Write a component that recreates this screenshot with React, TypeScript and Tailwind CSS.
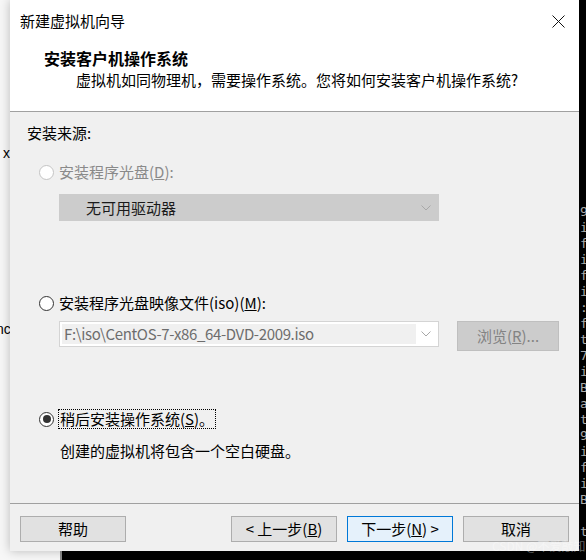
import React from 'react';

const FONT = { fontFamily: '"Noto Sans CJK SC", "Noto Sans", sans-serif' };

const Radio = ({ checked, disabled }: { checked?: boolean; disabled?: boolean }) => (
    <span
        className={`w-[15px] h-[15px] shrink-0 rounded-full border flex items-center justify-center bg-white ${
            disabled ? 'border-[#c4c4c4]' : 'border-[#333333]'
        }`}
    >
        {checked && <span className="w-[8px] h-[8px] rounded-full bg-[#333333]" />}
    </span>
);

const Chevron = ({ color = '#a0a0a0' }: { color?: string }) => (
    <svg width="10" height="6" viewBox="0 0 10 6" className="shrink-0">
        <polyline points="0.5,0.5 5,5 9.5,0.5" fill="none" stroke={color} strokeWidth="1" />
    </svg>
);

const Button = ({ children, primary }: { children: React.ReactNode; primary?: boolean }) => (
    <div
        className={`w-[106px] h-[26px] flex items-center justify-center text-[15px] text-black border ${
            primary ? 'bg-[#e5f1fb] border-[#0078d7]' : 'bg-[#e1e1e1] border-[#adadad]'
        }`}
    >
        {children}
    </div>
);

// bits of the terminal text peeking out on the right
const sideChars = ['9', 'i', 'f', 'i', 'f', 'i', ':', 'f', 't', '7', 'i', 'B', 'a', 't', '9', 'i', 'f', 'i', 'B', '', 't'];

export default function App() {
    return (
        <div className="relative w-[586px] h-[560px] overflow-hidden bg-[#f7f7f7]" style={FONT}>
            {/* terminal window behind */}
            <div className="absolute left-[60px] top-0 right-0 bottom-0 bg-black border-l-2 border-[#8c8c8c]" />
            <div
                className="absolute left-[580px] top-[204px] flex flex-col text-[13px] leading-[16px] text-[#b4b4b4]"
                style={{ fontFamily: '"DejaVu Sans Mono", monospace' }}
            >
                {sideChars.map((c, i) => (
                    <span key={i} className="h-[16px]">{c}</span>
                ))}
            </div>
            <span className="absolute left-[3px] top-[143px] text-[14px] text-black" style={{ fontFamily: '"Liberation Sans", sans-serif' }}>x</span>
            <span className="absolute left-[-4px] top-[319px] text-[14px] text-black" style={{ fontFamily: '"Liberation Sans", sans-serif' }}>nc</span>

            {/* dialog */}
            <div className="absolute left-[10px] top-0 w-[569px] h-[551px] flex flex-col bg-[#f0f0f0] shadow-[0_0_10px_rgba(0,0,0,0.25)]">
                {/* title bar */}
                <div className="h-[42px] flex items-center justify-between bg-white pl-[10px] pr-[14px]">
                    <span className="text-[15px] text-black">新建虚拟机向导</span>
                    <svg width="13" height="13" viewBox="0 0 13 13">
                        <path d="M0.5 0.5 L12.5 12.5 M12.5 0.5 L0.5 12.5" stroke="#111" strokeWidth="1" />
                    </svg>
                </div>

                {/* header */}
                <div className="h-[70px] bg-white border-b border-[#a0a0a0] flex flex-col">
                    <div className="mt-[6px] pl-[34px] text-[16px] leading-[20px] font-bold text-black">安装客户机操作系统</div>
                    <div className="mt-[2px] pl-[66px] text-[15px] leading-[20px] text-black">
                        虚拟机如同物理机，需要操作系统。您将如何安装客户机操作系统?
                    </div>
                </div>

                {/* body */}
                <div className="flex flex-col text-[15px] leading-[20px]">
                    <div className="mt-[11px] pl-[17px] text-black">安装来源:</div>

                    <div className="mt-[19px] pl-[29px] flex items-center gap-[5px] text-[#8a8a8a]">
                        <Radio disabled />
                        <span>
                            安装程序光盘(<span className="underline">D</span>):
                        </span>
                    </div>

                    <div className="mt-[12px] ml-[49px] w-[380px] h-[27px] bg-[#cccccc] flex items-center justify-between pl-[27px] pr-[8px] text-[#1a1a1a]">
                        <span>无可用驱动器</span>
                        <Chevron color="#a8a8a8" />
                    </div>

                    <div className="mt-[72px] pl-[29px] flex items-center gap-[5px] text-black">
                        <Radio />
                        <span>
                            安装程序光盘映像文件(iso)(<span className="underline">M</span>):
                        </span>
                    </div>

                    <div className="mt-[8px] ml-[49px] flex items-start gap-[18px]">
                        <div className="w-[380px] h-[26px] bg-white border border-[#d4d4d4] flex items-center p-[2px]">
                            <div className="h-full w-[354px] bg-[#f0f0f0] flex items-center pl-[2px] text-[#6d6d6d] tracking-[-0.35px]">
                                F:\iso\CentOS-7-x86_64-DVD-2009.iso
                            </div>
                            <div className="flex-1 flex items-center justify-center">
                                <Chevron color="#a8a8a8" />
                            </div>
                        </div>
                        <div className="w-[102px] h-[30px] bg-[#cccccc] border border-[#bfbfbf] flex items-center justify-center text-[#838383]">
                            浏览(<span className="underline">R</span>)...
                        </div>
                    </div>

                    <div className="mt-[58px] pl-[29px] flex items-center gap-[4px] text-black">
                        <Radio checked />
                        <span className="border border-dotted border-black px-[1px] leading-[18px]">
                            稍后安装操作系统(<span className="underline">S</span>)。
                        </span>
                    </div>

                    <div className="mt-[12px] pl-[50px] text-black">创建的虚拟机将包含一个空白硬盘。</div>
                </div>

                {/* footer */}
                <div className="mt-auto h-[48px] border-t border-[#a0a0a0] flex items-start justify-between px-[10px] pt-[12px]">
                    <div className="w-[105px]">
                        <Button>帮助</Button>
                    </div>
                    <div className="flex gap-[10px]">
                        <Button>
                            &lt; 上一步(<span className="underline">B</span>)
                        </Button>
                        <Button primary>
                            下一步(<span className="underline">N</span>) &gt;
                        </Button>
                        <Button>取消</Button>
                    </div>
                </div>
            </div>

            {/* watermark */}
            <div className="absolute left-[492px] top-[539px] text-[12px] leading-[14px] text-white/40 whitespace-nowrap">
                CSDN @不爱敲知it
            </div>
        </div>
    );
}
